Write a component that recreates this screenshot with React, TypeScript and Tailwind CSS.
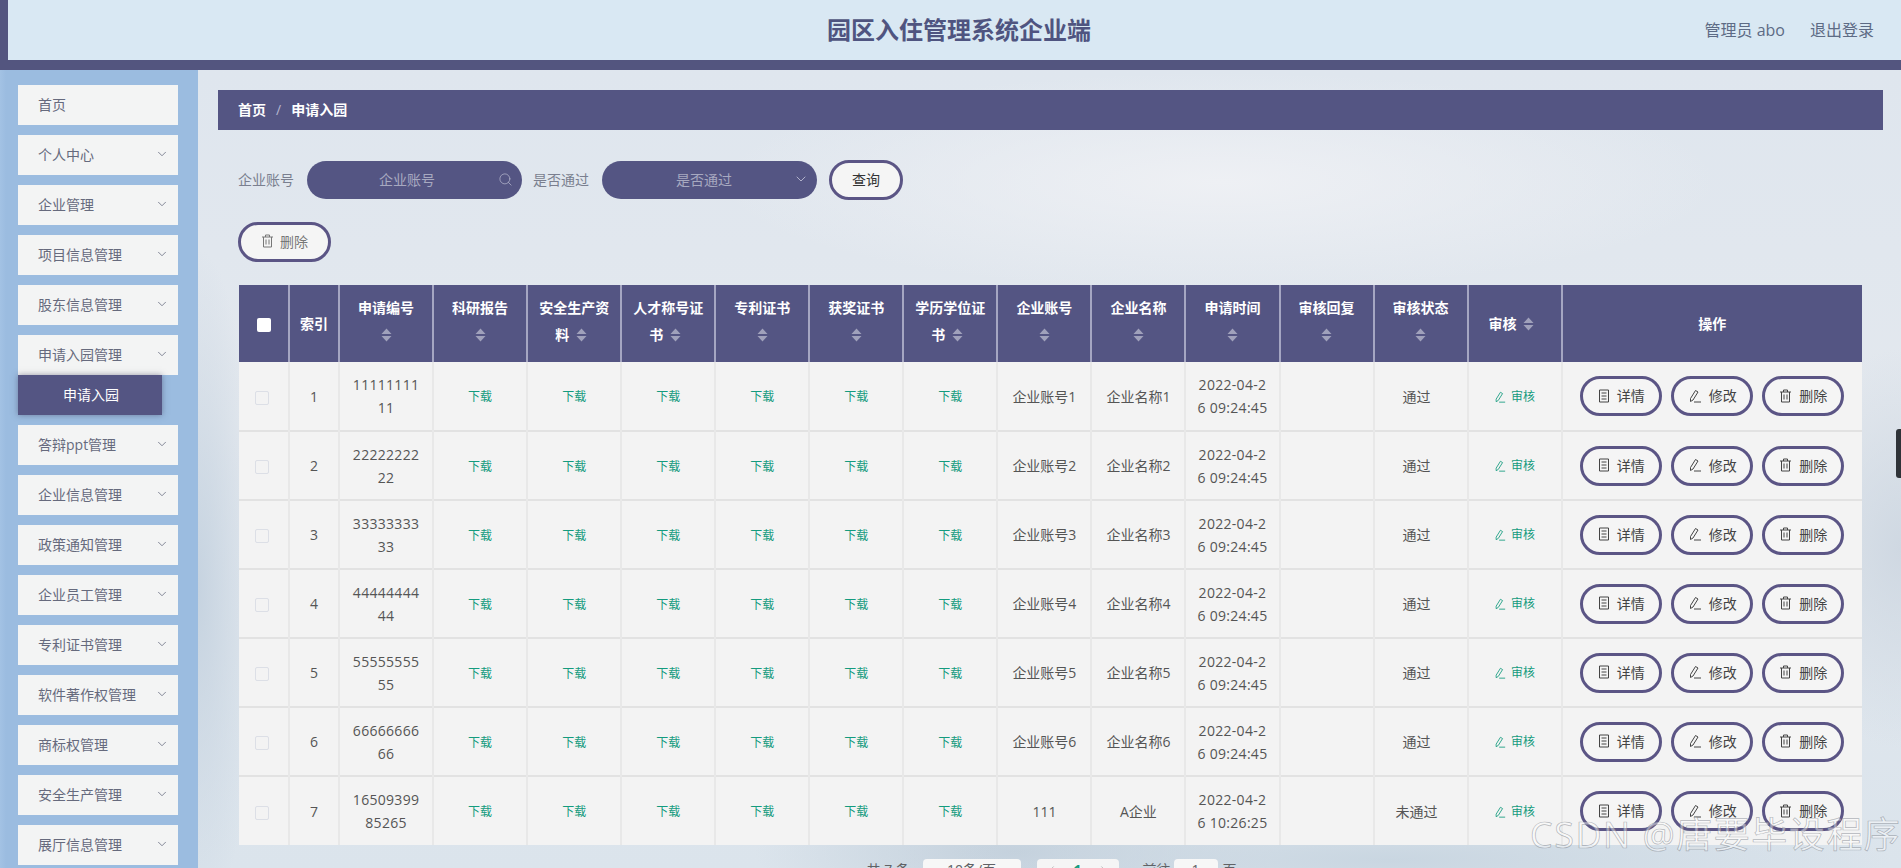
import { ChevronDown, Search, ChevronLeft, ChevronRight } from 'lucide-react'

const menu = ['首页', '个人中心', '企业管理', '项目信息管理', '股东信息管理', '申请入园管理', '答辩ppt管理', '企业信息管理', '政策通知管理', '企业员工管理', '专利证书管理', '软件著作权管理', '商标权管理', '安全生产管理', '展厅信息管理']

const columns = ['申请编号', '科研报告', '安全生产资料', '人才称号证书', '专利证书', '获奖证书', '学历学位证书', '企业账号', '企业名称', '申请时间', '审核回复', '审核状态']

const rows = [
  { id: 1, no: '1111111111', account: '企业账号1', name: '企业名称1', time: '2022-04-26 09:24:45', status: '通过' },
  { id: 2, no: '2222222222', account: '企业账号2', name: '企业名称2', time: '2022-04-26 09:24:45', status: '通过' },
  { id: 3, no: '3333333333', account: '企业账号3', name: '企业名称3', time: '2022-04-26 09:24:45', status: '通过' },
  { id: 4, no: '4444444444', account: '企业账号4', name: '企业名称4', time: '2022-04-26 09:24:45', status: '通过' },
  { id: 5, no: '5555555555', account: '企业账号5', name: '企业名称5', time: '2022-04-26 09:24:45', status: '通过' },
  { id: 6, no: '6666666666', account: '企业账号6', name: '企业名称6', time: '2022-04-26 09:24:45', status: '通过' },
  { id: 7, no: '1650939985265', account: '111', name: 'A企业', time: '2022-04-26 10:26:25', status: '未通过' },
]

function TrashIcon() {
  return (
    <svg width="13" height="14" viewBox="0 0 13 14" fill="none" stroke="currentColor" strokeWidth="1">
      <path d="M1 3h11M4.500 3V1h4v2M2.500 3v10h8V3M5 5.500v5M8 5.500v5" />
    </svg>
  )
}

function DocIcon() {
  return (
    <svg width="12" height="14" viewBox="0 0 12 14" fill="none" stroke="currentColor" strokeWidth="1">
      <path d="M1.500 1h9v12h-9zM3.500 4h5M3.500 7h5M3.500 10h5" />
    </svg>
  )
}

function EditIcon({ size = 14 }: { size?: number }) {
  return (
    <svg width={size} height={size} viewBox="0 0 14 14" fill="none" stroke="currentColor" strokeWidth="1">
      <path d="M7.500 1.500l2.500 1.500-5 8-2.500 1.500 0-3zM6 13h7" />
    </svg>
  )
}

function Sort() {
  return (
    <span className="inline-flex h-[14px] w-[24px] items-center justify-center align-[-2px]">
      <svg width="11" height="14" viewBox="0 0 11 14" fill="#a0a1bb">
        <path d="M5.500 0.500l5 5.500H0.500zM5.500 13.500L0.500 8h10z" />
      </svg>
    </span>
  )
}

function ActionButton({ icon, label }: { icon: React.ReactNode; label: string }) {
  return (
    <button className="flex h-[40px] w-[82px] items-center justify-center gap-[7px] rounded-full border-[3px] border-[#5b5585] bg-[#f5f5f5] pb-[1px] text-[14px] text-[#444]">
      {icon}
      {label}
    </button>
  )
}

export default function App() {
  return (
    <div className="relative h-[868px] w-[1901px] overflow-hidden bg-[#dde4ec] font-['Open_Sans','Noto_Sans_CJK_SC',sans-serif]">
      <header className="grid h-[70px] grid-cols-[1fr_auto_1fr] items-center border-b-[10px] border-l-[8px] border-[#53557f] bg-[#d9e8f3] pl-[9px]">
        <div />
        <h1 className="text-[24px] font-bold text-[#4f5480]">园区入住管理系统企业端</h1>
        <div className="flex justify-end gap-[25px] pr-[27px] text-[16px] text-[#5d6b85]">
          <span>管理员 abo</span>
          <span>退出登录</span>
        </div>
      </header>

      <div className="flex h-[798px]">
        <aside className="w-[198px] shrink-0 bg-[linear-gradient(90deg,#a3c2e4_0px,#9bbce0_6px,#9bbce0_198px)] pl-[18px] pt-[15px]">
          {menu.map(m => (
            <div key={m}>
              <div className="flex h-[40px] w-[160px] items-center justify-between bg-[#f3f4f4] pb-[2px] pl-[20px] pr-[9px] text-[14px] text-[#666a7d]">
                <span>{m}</span>
                {m !== '首页' && <ChevronDown size={14} strokeWidth={1.3} className="text-[#5f6479]" />}
              </div>
              {m === '申请入园管理' ? (
                <div className="mb-[10px] flex h-[40px] w-[144px] items-center bg-[#545583] pb-[2px] pl-[45px] text-[14px] text-white shadow-[0_0_6px_rgba(60,60,90,0.5)]">
                  申请入园
                </div>
              ) : (
                <div className="h-[10px]" />
              )}
            </div>
          ))}
        </aside>

        <main className="relative flex-1 bg-[radial-gradient(ellipse_500px_60px_at_70%_99%,#c9d6e1,transparent),radial-gradient(ellipse_260px_70px_at_48%_98%,#c3d0dc,transparent),radial-gradient(ellipse_60px_340px_at_0%_65%,#c6d3e0,transparent),radial-gradient(ellipse_120px_200px_at_100%_60%,#cfd8e2,transparent),radial-gradient(ellipse_500px_110px_at_60%_14%,#eef0f4,transparent),linear-gradient(180deg,#dfe6ee_0%,#e3e8ee_45%,#dbe4ec_100%)] pl-[20px] pr-[18px] pt-[20px]">
          <div className="flex h-[40px] items-center bg-[#545583] pb-[2px] pl-[20px] text-[14px] font-bold text-white">
            <span>首页</span>
            <span className="ml-[10px] mr-[10px] font-normal text-[#b4b6cf]">/</span>
            <span>申请入园</span>
          </div>

          <div className="mt-[30px] flex h-[40px] items-center pl-[20px] text-[14px] text-[#7a7f8f]">
            <span className="pb-[2px]">企业账号</span>
            <div className="relative ml-[13px] h-[38px] w-[215px]">
              <input
                placeholder="企业账号"
                className="h-full w-full rounded-full bg-[#545583] pb-[2px] pl-[15px] pr-[30px] text-center text-[14px] text-white outline-none placeholder:text-[#a7a9c0]"
              />
              <Search size={15} strokeWidth={1.2} className="absolute right-[9px] top-[11px] text-[#b4b6cc]" />
            </div>
            <span className="ml-[11px] pb-[2px]">是否通过</span>
            <div className="ml-[13px] flex h-[38px] w-[215px] items-center rounded-full bg-[#545583] pb-[2px] pl-[15px] pr-[8px] text-[#a7a9c0]">
              <span className="flex-1 pr-[2px] text-center">是否通过</span>
              <ChevronDown size={16} strokeWidth={1.3} className="text-[#c0c2d6]" />
            </div>
            <button className="ml-[12px] h-[40px] w-[74px] rounded-full border-[3px] border-[#5b5585] bg-[#f5f5f5] pb-[2px] text-[14px] text-[#333]">
              查询
            </button>
          </div>

          <button className="ml-[20px] mt-[22px] flex h-[40px] w-[93px] items-center justify-center gap-[6px] rounded-full border-[3px] border-[#5b5585] bg-[#f5f5f5] pb-[2px] text-[14px] text-[#777]">
            <TrashIcon />
            删除
          </button>

          <table className="ml-[21px] mt-[23px] w-[1623px] table-fixed border-collapse bg-[#f3f3f3] text-center text-[14px] text-[#555]">
            <colgroup>
              <col className="w-[50px]" />
              <col className="w-[50px]" />
              {columns.map(c => (
                <col key={c} className="w-[94px]" />
              ))}
              <col className="w-[94px]" />
              <col className="w-[300px]" />
            </colgroup>
            <thead>
              <tr className="h-[77px] bg-[#545583] font-bold text-white">
                <th className="border-r-2 border-[#a5a6c2]">
                  <span className="inline-block h-[14px] w-[14px] rounded-[2px] bg-white align-middle" />
                </th>
                <th className="border-r-2 border-[#a5a6c2]">索引</th>
                {columns.map(c => (
                  <th key={c} className="break-all border-r-2 border-[#a5a6c2] px-[10px] pb-[6px] text-[14px] leading-[27px]">
                    {c}
                    <Sort />
                  </th>
                ))}
                <th className="border-r-2 border-[#a5a6c2]">
                  审核
                  <Sort />
                </th>
                <th>操作</th>
              </tr>
            </thead>
            <tbody>
              {rows.map(r => (
                <tr key={r.id} className={r.id === 7 ? 'h-[69px]' : 'h-[69px] border-b-2 border-[#e2e2e2]'}>
                  <td className="border-r-2 border-[#e8e8e8] pr-[4px]">
                    <span className="inline-block h-[14px] w-[14px] rounded-[2px] border border-[#dcdfe6] bg-[#f3f3f3] align-middle" />
                  </td>
                  <td className="border-r-2 border-[#e8e8e8]">{r.id}</td>
                  <td className="break-all border-r-2 border-[#e8e8e8] px-[10px] leading-[23px] tracking-[0.3px]">{r.no}</td>
                  {[0, 1, 2, 3, 4, 5].map(i => (
                    <td key={i} className="border-r-2 border-[#e8e8e8] pt-[2px] text-[12px] text-[#149b7e]">
                      下载
                    </td>
                  ))}
                  <td className="border-r-2 border-[#e8e8e8]">{r.account}</td>
                  <td className="border-r-2 border-[#e8e8e8]">{r.name}</td>
                  <td className="break-all border-r-2 border-[#e8e8e8] px-[10px] leading-[23px] tracking-[0.3px]">{r.time}</td>
                  <td className="border-r-2 border-[#e8e8e8]" />
                  <td className="border-r-2 border-[#e8e8e8] pr-[8px]">{r.status}</td>
                  <td className="border-r-2 border-[#e8e8e8] pt-[3px] text-[12px] text-[#149b7e]">
                    <span className="inline-flex items-center gap-[5px]">
                      <EditIcon size={12} />
                      审核
                    </span>
                  </td>
                  <td>
                    <div className="flex justify-center gap-[9px]">
                      <ActionButton icon={<DocIcon />} label="详情" />
                      <ActionButton icon={<EditIcon />} label="修改" />
                      <ActionButton icon={<TrashIcon />} label="删除" />
                    </div>
                  </td>
                </tr>
              ))}
            </tbody>
          </table>

          <div className="ml-[21px] mt-[14px] flex w-[1623px] items-start justify-center pl-[2px] text-[14px] leading-[20px] text-[#606266]">
            <span className="mt-[1px] w-[44px]">共 7 条</span>
            <div className="ml-[12px] h-[36px] w-[98px] rounded-[4px] bg-[#f7f7f7] pt-[1px] text-center">10条/页</div>
            <div className="ml-[16px] flex h-[36px] w-[82px] justify-between rounded-[4px] bg-[#f5f5f5] px-[7px] pt-[1px]">
              <ChevronLeft size={15} strokeWidth={1.2} className="mt-[3px] text-[#aaa]" />
              <span className="font-bold text-[#149b7e]">1</span>
              <ChevronRight size={15} strokeWidth={1.2} className="mt-[3px] text-[#aaa]" />
            </div>
            <span className="ml-[24px] mt-[1px]">前往</span>
            <div className="ml-[3px] h-[36px] w-[44px] rounded-[4px] bg-[#f7f7f7] pt-[1px] text-center">1</div>
            <span className="ml-[5px] mt-[1px]">页</span>
          </div>
        </main>
      </div>

      <div className="absolute right-0 top-[429px] h-[49px] w-[5px] rounded-l-[3px] bg-[#2f3338]" />
      <div className="absolute left-[1530px] top-[813px] whitespace-nowrap text-[36px] leading-[44px] tracking-[1.5px] text-[rgba(255,255,255,0.45)] [-webkit-text-stroke:0.7px_rgba(120,125,135,0.55)]">
        CSDN @唐要毕设程序
      </div>
    </div>
  )
}
